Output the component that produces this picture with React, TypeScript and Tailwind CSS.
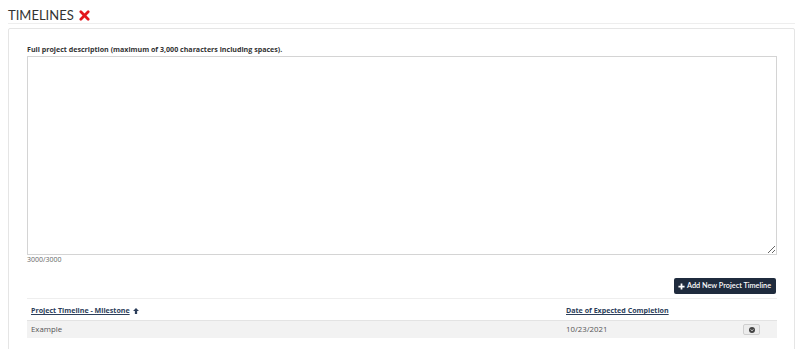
import React from "react";

export default function App() {
  return (
    <div className="w-[800px] h-[349px] bg-white overflow-hidden" style={{ fontFamily: '"Open Sans", sans-serif' }}>
      <div className="pl-[8px] pr-[5px] pt-[8px]">
        <div className="flex items-end h-[16px] border-b border-[#eeeeee] pb-[1px]">
          <h2 className="text-[13px] leading-none text-[#333]" style={{ fontFamily: 'Lato, sans-serif' }}>TIMELINES</h2>
          <svg className="ml-[5px] mb-[1px]" width="11" height="11" viewBox="0 0 12 12">
            <path d="M2 2 L10 10 M10 2 L2 10" stroke="#e3161c" strokeWidth="3" strokeLinecap="round" />
          </svg>
        </div>
        <div className="mt-[4px] border border-[#e5e5e5] rounded-[2px] h-[400px] px-[18px] pt-[15px]">
          <div className="text-[7.1px] font-bold text-[#333] leading-[10px]">Full project description (maximum of 3,000 characters including spaces).</div>
          <textarea className="mt-[2px] block w-[750px] h-[199px] border border-[#d4d4d4] resize-y bg-white" />
          <div className="text-[7px] text-[#666666] mt-[0px] leading-[10px]">3000/3000</div>
          <div className="flex justify-end mt-[13px]">
            <button className="flex items-center gap-[2px] h-[16px] pl-[4px] pr-[5px] bg-[#1f2b3d] text-white rounded-[2px] text-[7.3px] font-semibold" style={{ fontFamily: 'Lato, sans-serif' }}>
              <svg width="7" height="7" viewBox="0 0 8 8"><path d="M4 0.5 V7.5 M0.5 4 H7.5" stroke="white" strokeWidth="2" /></svg>
              Add New Project Timeline
            </button>
          </div>
          <div className="mt-[4px] w-[750px] border-t border-[#eeeeee]">
            <div className="flex items-end h-[21px] pb-[4px] text-[7.1px] font-bold text-[#2c3e5a]">
              <div className="pl-[4px] w-[539px] flex items-center gap-[3px]">
                <span className="underline">Project Timeline - Milestone</span>
                <svg width="6" height="6" viewBox="0 0 8 8"><path d="M4 0 L8 4 H5.5 V8 H2.5 V4 H0 Z" fill="#2c3e5a" /></svg>
              </div>
              <div className="underline">Date of Expected Completion</div>
            </div>
            <div className="flex items-center h-[18px] bg-[#f2f2f2] border-t border-[#e3e3e3] text-[7.8px] text-[#555555]">
              <div className="pl-[4px] w-[539px]">Example</div>
              <div className="w-[177px]">10/23/2021</div>
              <button className="w-[17px] h-[11px] bg-[#ececec] border border-[#cfcfcf] rounded-[2px] flex items-center justify-center">
                <svg width="6" height="6" viewBox="0 0 8 8"><circle cx="4" cy="4" r="4" fill="#444" /><path d="M2.3 3.3 L4 5 L5.7 3.3" stroke="white" strokeWidth="1.2" fill="none" /></svg>
              </button>
            </div>
          </div>
        </div>
      </div>
    </div>
  );
}
